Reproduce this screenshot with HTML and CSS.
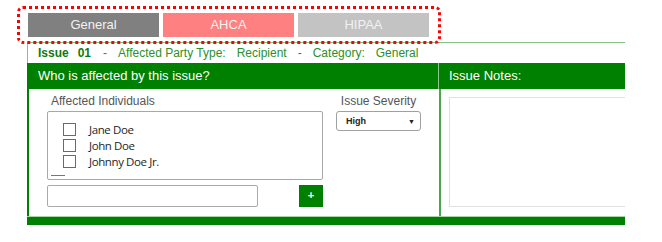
FILE: index.html
```html
<!DOCTYPE html>
<html>
<head>
<meta charset="UTF-8">
<title>Issue</title>
<link rel="stylesheet" href="styles.css">
</head>
<body>
	<div class="tabs">
		<div class="tab general">General</div>
		<div class="tab ahca">AHCA</div>
		<div class="tab hipaa">HIPAA</div>
	</div>
	<div class="panel">
		<div class="issue-line">
			<b>Issue</b><b class="num">01</b><span>-</span><span>Affected Party Type:</span><span>Recipient</span><span>-</span><span>Category:</span><span>General</span>
		</div>
		<div class="head">
			<div class="head-left">Who is affected by this issue?</div>
			<div class="head-right">Issue Notes:</div>
		</div>
		<div class="body">
			<div class="left">
				<div class="row">
					<div class="individuals">
						<div class="label">Affected Individuals</div>
						<div class="listbox">
							<div class="person"><span class="check"></span>Jane Doe</div>
							<div class="person"><span class="check"></span>John Doe</div>
							<div class="person"><span class="check"></span>Johnny Doe Jr.</div>
							<div class="dash"></div>
						</div>
					</div>
					<div class="severity">
						<div class="label center">Issue Severity</div>
						<div class="select"><span>High</span><span class="arrow">&#9660;</span></div>
					</div>
				</div>
				<div class="add-row">
					<div class="input"></div>
					<div class="plus">+</div>
				</div>
			</div>
			<div class="right">
				<div class="notes"></div>
			</div>
		</div>
		<div class="foot"></div>
	</div>
</body>
</html>
```

FILE: styles.css
```css
body {
	margin: 0;
	background: #fff;
	font-family: "Liberation Sans", Arial, sans-serif;
}
.tabs {
	position: relative;
	z-index: 1;
	margin: 6px 0 0 17px;
	width: 424px;
	height: 38px;
	border: 3px dotted #ff0000;
	border-radius: 6px;
	display: flex;
	gap: 4px;
	padding: 4px 0 0 8px;
	box-sizing: border-box;
}
.tab {
	width: 131px;
	height: 24px;
	line-height: 24px;
	text-align: center;
	color: #f2f2f2;
	font-size: 13px;
}
.general { background: #808080; }
.ahca { background: #ff8080; }
.hipaa { background: #c3c3c3; }

.panel {
	margin: -2px 0 0 27px;
	width: 598px;
	overflow: hidden;
	border-top: 1px solid #86c386;
}
.issue-line {
	height: 20px;
	border-left: 1px solid #86c386;
	display: flex;
	align-items: center;
	padding-left: 10px;
	font-size: 12px;
	color: #2b902b;
}
.issue-line b { color: #107a10; margin-right: 9px; }
.issue-line .num { margin-right: 12px; }
.issue-line span { margin-right: 11px; }
.head {
	display: grid;
	grid-template-columns: 412px 1fr;
	height: 26px;
	background: #008000;
	color: #fff;
	font-size: 13px;
	line-height: 26px;
}
.head-left {
	padding-left: 11px;
	border-right: 1px solid #8cc88c;
}
.head-right { padding-left: 10px; }
.body {
	display: grid;
	grid-template-columns: 414px 1fr;
	height: 127px;
}
.left {
	border-left: 2px solid #008000;
	border-right: 2px solid #4ca64c;
	padding: 4px 0 0 18px;
}
.row {
	display: flex;
	gap: 13px;
}
.individuals { width: 276px; }
.label {
	font-size: 12px;
	color: #555;
	line-height: 16px;
	padding-left: 4px;
	margin-bottom: 2px;
}
.center { text-align: center; padding-left: 0; }
.listbox {
	box-sizing: border-box;
	height: 69px;
	border: 1px solid #a8a8a8;
	border-radius: 2px;
	padding: 9px 0 0 15px;
	position: relative;
}
.person {
	display: flex;
	align-items: center;
	height: 16px;
	font-family: "Open Sans", sans-serif;
	font-size: 11.5px;
	font-weight: 500;
	letter-spacing: -0.4px;
	color: #1e1e1e;
}
.check {
	width: 11px;
	height: 11px;
	border: 1px solid #6a6a6a;
	margin-right: 13px;
}
.dash {
	position: absolute;
	left: 3px;
	bottom: 3px;
	width: 14px;
	border-top: 1px solid #777;
}
.severity { width: 85px; }
.select {
	height: 18px;
	border: 1px solid #a0a0a0;
	border-radius: 3px;
	display: flex;
	align-items: center;
	justify-content: space-between;
	padding: 0 5px 0 9px;
	font-size: 9px;
	font-weight: bold;
	color: #222;
}
.arrow { font-size: 7px; }
.add-row {
	display: flex;
	justify-content: space-between;
	width: 276px;
	margin-top: 5px;
}
.input {
	width: 209px;
	height: 20px;
	border: 1px solid #aaa;
	border-radius: 2px;
}
.plus {
	width: 24px;
	height: 22px;
	background: #008000;
	color: #fff;
	font-size: 11px;
	font-weight: bold;
	text-align: center;
	line-height: 21px;
}
.right { padding: 8px 0 0 8px; }
.notes {
	width: 200px;
	height: 108px;
	border: 1px solid #e0e0e0;
}
.foot {
	height: 8px;
	background: #008000;
	border-top: 1px solid #a8d4a8;
}
```
